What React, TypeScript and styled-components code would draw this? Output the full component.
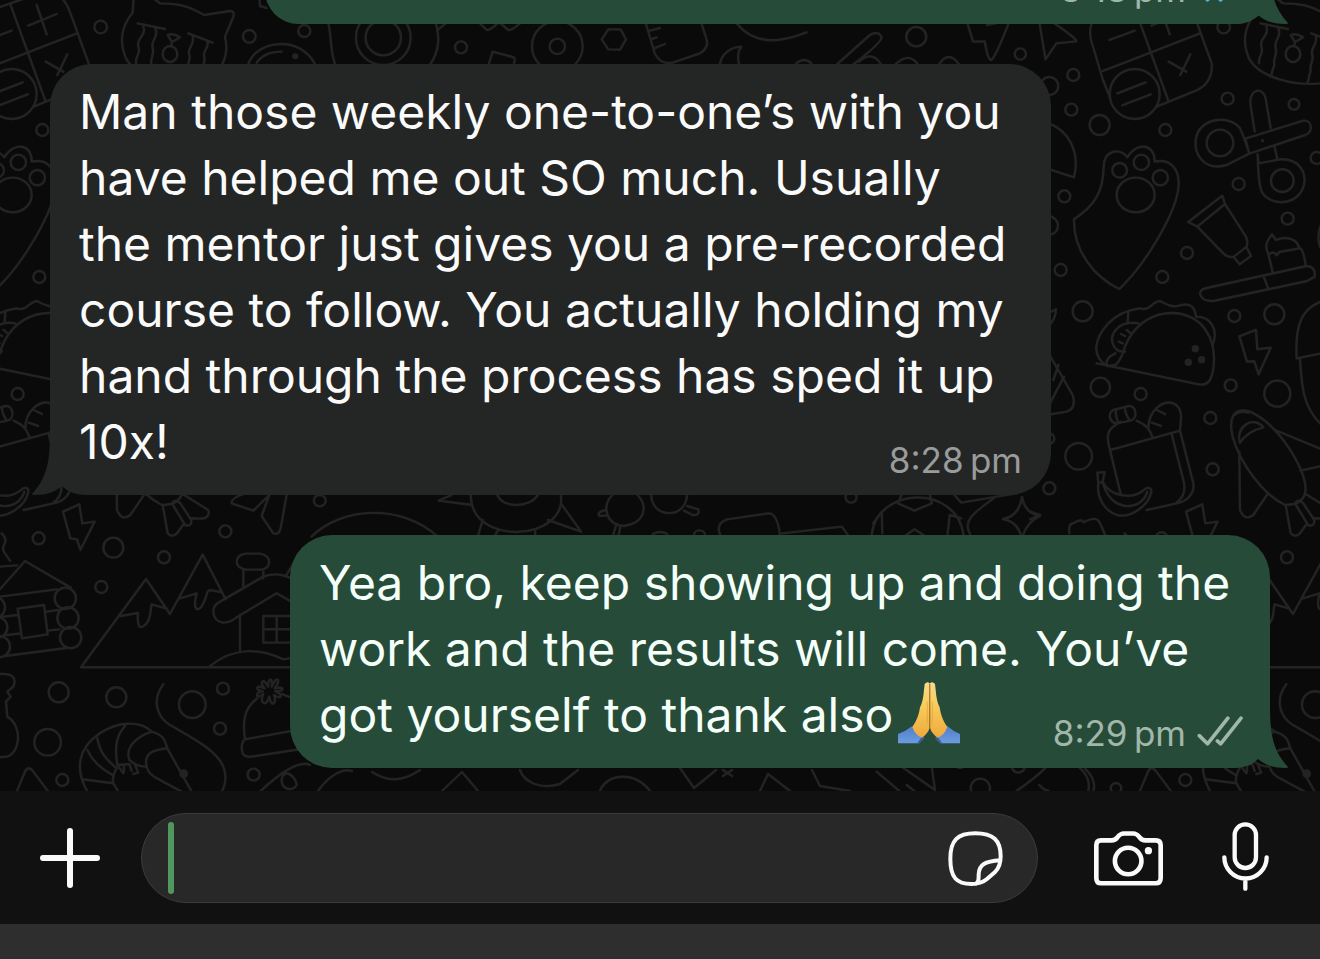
import React from "react";
import styled, { createGlobalStyle } from "styled-components";

const GlobalStyle = createGlobalStyle`
  *, *::before, *::after { box-sizing: border-box; }
  body { margin: 0; background: #0a0a0a; }
`;

const Screen = styled.main`
  display: flex;
  flex-direction: column;
  height: 100vh;
  overflow: hidden;
  font-family: Inter, "Liberation Sans", sans-serif;
`;

const Conversation = styled.section`
  position: relative;
  isolation: isolate;
  flex: 1;
  min-height: 0;
  display: flex;
  flex-direction: column;
  justify-content: flex-end;
  gap: 40px;
  padding: 0 50px 23px;
  overflow: hidden;
  background: #0a0a0a;
`;

const Wallpaper = styled.svg`
  position: absolute;
  inset: 0;
  z-index: -1;
  width: 100%;
  height: 100%;
`;

const Bubble = styled.article<{ $sent?: boolean; $max: number }>`
  position: relative;
  flex: none;
  width: 100%;
  max-width: ${(p) => p.$max}px;
  align-self: ${(p) => (p.$sent ? "flex-end" : "flex-start")};
  padding: 15px ${(p) => (p.$sent ? 27 : 29)}px 20px 29px;
  border-radius: 42px;
  background: ${(p) => (p.$sent ? "#274b39" : "#242625")};
  color: ${(p) => (p.$sent ? "#f4fff9" : "#fafafa")};
`;

const TailShape = styled.svg<{ $sent?: boolean }>`
  position: absolute;
  bottom: 0;
  ${(p) => (p.$sent ? "right: -18px;" : "left: -18px; transform: scaleX(-1);")}
  width: 60px;
  height: 60px;
  fill: ${(p) => (p.$sent ? "#274b39" : "#242625")};
`;

const Text = styled.p`
  margin: 0;
  font-size: 48px;
  line-height: 66px;
  white-space: pre-line;
`;

const LastRow = styled.div`
  display: flex;
  align-items: flex-end;
  justify-content: space-between;
`;

const Meta = styled.div<{ $sent?: boolean }>`
  flex: none;
  display: flex;
  align-items: baseline;
  gap: 11px;
  margin-left: auto;
  font-size: 35px;
  line-height: 30px;
  color: ${(p) => (p.$sent ? "#a0b7aa" : "#9a9b9b")};
`;

const TickIcon = styled.svg<{ $read?: boolean }>`
  width: 46px;
  height: 30px;
  fill: none;
  stroke: ${(p) => (p.$read ? "#5fb4e6" : "#a0b7aa")};
  stroke-width: 11;
  stroke-linecap: round;
  stroke-linejoin: round;
`;

const Emoji = styled.svg`
  width: 62px;
  height: 62px;
  margin-left: 5px;
  vertical-align: -12px;
`;

const Composer = styled.form`
  flex: none;
  display: flex;
  align-items: center;
  padding: 22px 51px 21px 40px;
  background: #111111;
`;

const IconButton = styled.button`
  flex: none;
  display: flex;
  padding: 0;
  border: 0;
  background: none;
  color: #fafafa;
  cursor: pointer;
`;

const Icon = styled.svg`
  display: block;
  fill: none;
  stroke: currentColor;
  stroke-linecap: round;
  stroke-linejoin: round;
`;

const Field = styled.div`
  flex: 1;
  min-width: 0;
  display: flex;
  align-items: center;
  height: 90px;
  margin: 0 56px 0 41px;
  padding: 0 34px 0 26px;
  border: 1px solid #3b3b3b;
  border-radius: 45px;
  background: #282828;
`;

const Caret = styled.span`
  flex: none;
  width: 6px;
  height: 72px;
  border-radius: 3px;
  background: #4f965f;
`;

const MessageInput = styled.input`
  flex: 1;
  min-width: 0;
  height: 72px;
  padding: 0 8px;
  border: 0;
  outline: 0;
  background: transparent;
  color: #fafafa;
  font: inherit;
  font-size: 48px;
`;

const Actions = styled.div`
  display: flex;
  align-items: center;
  gap: 59px;
`;

const KeyboardEdge = styled.div`
  flex: none;
  height: 35px;
  background: #2e2e2e;
`;

const Line = ({ d }: { d: string }) => <path d={d} vectorEffect="non-scaling-stroke" />;

const Rings = ({ at }: { at: number[][] }) => (
  <>
    {at.map(([x, y, r]) => (
      <circle key={`${x}-${y}-${r}`} cx={x} cy={y} r={r} vectorEffect="non-scaling-stroke" />
    ))}
  </>
);

const Doodles = () => (
  <g id="doodles">
    {/* calculator and crying cat */}
    <g transform="scale(.3333)">
      <Line d="M-60 240L-96 120C-104 80-95 55-60 42L60 0C120-22 165-35 190 0C208 20 214 50 266 190C270 230 250 262 211 275L101 320M30 10L137 305M-60 213L229 101M-40 120L35 92M85 77L170 42M110 15L140 103M137 185L190 215M202 163L172 225M-60 240L-38 295" />
      <Rings at={[[35, 282, 75], [302, 81, 19], [748, 109, 19], [913, 93, 18], [1150, 113, 82], [1150, 113, 53]]} />
      <Line d="M-17 280L68 247M-2 316L83 283" />
      <Line d="M402 -20L398 38C362 80 358 130 378 175C410 235 520 258 591 250C660 235 690 170 675 110L700 50Q705 33 690 33L612 45C560 15 530 10 480 10L460 -5" />
      <Line d="M413 70L495 87M565 100L638 128M430 78C440 110 408 112 415 140C424 160 405 168 408 190M465 82C478 112 452 118 458 144C465 165 448 174 454 196C446 212 450 220 442 230M578 106C586 138 560 140 568 166C574 180 558 192 563 215C555 230 560 240 553 248M622 122C630 145 606 150 613 172C618 190 602 200 605 220M503 105Q520 98 540 112Q528 120 516 126ZM516 126L513 138" />
      <ellipse cx="510" cy="162" rx="22" ry="24" vectorEffect="non-scaling-stroke" />
      <Line d="M745 192C770 120 900 105 945 192M770 188C790 160 815 156 845 155" />
      <circle cx="886" cy="169" r="9" fill="#232323" stroke="none" />
      <Line d="M985 70C995 110 990 150 1005 192M1305 60C1320 110 1320 150 1290 195M778 -10L780 18L800 24" />
    </g>
    {/* row above the first message */}
    <g transform="translate(340 14) scale(.3333)">
      <Rings at={[[363, 100, 18], [652, 97, 76], [652, 97, 23]]} />
      <Line d="M295 46L315 30M420 28L440 48Q450 50 475 26M478 25L505 48Q515 50 540 28M447 148L458 113L518 129Q528 132 522 148M805 46L842 46L858 76L840 107L805 106L785 76ZM915 20L945 120Q965 155 1000 145L1080 118Q1110 100 1098 70L1082 20M930 50L960 42M935 75L950 70M940 104L975 90M1190 28C1240 90 1310 90 1400 55M1140 150C1145 120 1170 100 1204 98C1192 115 1192 130 1197 150" />
    </g>
    <g transform="translate(640 0) scale(.4337 .3333)">
      <ellipse cx="637" cy="110" rx="23" ry="29" vectorEffect="non-scaling-stroke" />
      <ellipse cx="877" cy="162" rx="13" ry="17" vectorEffect="non-scaling-stroke" />
      <Line d="M455 192L530 105Q550 90 557 112Q558 128 480 205M505 185Q535 150 555 192M590 192Q620 155 640 192M360 190Q380 170 395 190M690 192Q712 150 735 192M755 70L768 125L795 124Q802 182 810 180Q820 170 850 70M800 75L838 65M920 60L935 178L960 130L1005 124Q1012 120 950 65" />
    </g>
    {/* paw, scissors, toothbrush and taco */}
    <g transform="translate(1030 60) scale(.3333)">
      <Rings at={[[58, 78, 27], [130, 45, 18], [124, 149, 18], [209, 195, 30], [406, 210, 18], [593, 116, 18], [792, 133, 16], [860, 294, 18], [626, 372, 18], [773, 476, 18], [471, 579, 18], [397, 651, 18], [103, 409, 18], [56, 497, 28], [92, 630, 18], [158, 754, 30], [613, 768, 18], [733, 763, 30], [269, 331, 22], [334, 307, 23], [391, 353, 23], [570, 249, 40], [757, 362, 34]]} />
      <Line d="M50 188C120 210 150 280 132 352L50 325M132 478C190 440 220 400 221 320C222 270 270 262 292 292C320 245 375 250 374 305C420 295 448 325 446 375C443 450 350 610 268 687C190 650 130 570 132 478" />
      <ellipse cx="317" cy="405" rx="57" ry="52" vectorEffect="non-scaling-stroke" />
      <Line d="M674 214L661 130C658 85 700 80 707 115L722 204M646 236L820 182C848 180 850 215 826 225L658 281ZM658 281L590 315C520 335 490 280 498 235C510 170 600 165 630 205Q640 225 658 281M683 283L686 310L750 298C810 295 830 340 822 375C805 440 720 440 695 395Q685 370 683 283M734 262L742 298" />
      <circle cx="698" cy="242" r="5" fill="#232323" stroke="none" />
      <Line d="M475 486L577 407L585 432L502 500ZM585 432L648 530Q655 545 650 560L612 590Q595 595 580 580L502 500M650 563L663 588L629 613L611 591M530 684L830 618Q858 620 854 650L832 663L550 723C510 725 495 690 530 684M702 652L714 684M728 637L716 585C700 550 715 540 726 523L738 540C760 530 800 530 808 565L748 576L740 586Q730 570 716 585M808 565Q820 565 827 615" />
      <Line d="M232 918C185 890 190 840 235 790C260 765 285 752 330 745C360 755 365 725 390 723C415 735 430 745 455 735C485 728 495 745 498 770C545 770 565 810 548 856M295 758L293 785M232 918L256 915C275 900 280 875 285 860C330 740 480 730 530 815C560 860 555 930 540 960Q530 975 510 974L200 910M325 790C270 780 235 820 250 855C255 870 265 876 285 875M256 880Q225 895 230 915M273 822L285 828M290 810L299 818M266 845L278 850" />
      <g fill="#232323" stroke="none">
        <circle cx="496" cy="866" r="11" />
        <circle cx="475" cy="907" r="11" />
        <circle cx="515" cy="899" r="11" />
      </g>
      <Line d="M628 829L678 810L682 868L722 863L686 943L673 904L651 905ZM800 895C795 800 810 735 900 717M800 895L900 875M810 897C815 980 820 1040 870 1090M890 470Q855 510 870 560M55 760L78 748Q78 775 55 800" />
    </g>
    {/* lunch bag, banana and rocket */}
    <g transform="translate(1030 360) scale(.3333)">
      <Rings at={[[211, 82, 29], [332, 102, 18], [602, 76, 18], [742, 101, 39], [541, 174, 18], [146, 289, 40], [57, 236, 16], [58, 385, 18], [548, 328, 18], [771, 592, 18], [395, 535, 18]]} />
      <Line d="M50 -30L128 105Q140 145 110 155L50 165M70 60L85 15M60 130L102 50M240 270C225 220 235 205 272 185M320 182C350 195 360 210 367 230M240 270L450 212L490 370C495 400 470 425 440 430L350 450M240 270L272 402M425 222L460 360Q472 405 440 427M250 150L295 138C320 135 325 178 300 182L262 190C238 190 232 158 250 150M258 152Q255 165 265 188M285 145Q285 160 298 180M355 205C355 150 400 120 430 130C465 145 450 190 450 212M380 150L405 162M365 188L393 198" />
      <Line d="M202 338L224 337L218 365C240 410 310 420 342 390C350 380 365 382 364 395C355 440 300 475 260 465C220 450 200 410 205 370ZM218 365C240 460 335 455 352 395M205 370L218 365" />
      <Line d="M765 435C700 405 630 310 608 230C595 175 610 140 660 155C750 195 840 345 825 400Q815 435 765 435M612 165Q630 150 655 158M630 248C615 200 670 165 700 202Q650 215 630 248M628 275L630 450Q645 485 670 465L712 403M735 210L905 280M812 332L910 310M768 440L782 520Q795 535 810 520L828 495M828 403L904 450Q910 475 880 476L855 475M795 430Q805 415 820 430L853 480Q855 500 835 496ZM468 455L517 433L526 490L563 485L520 570L510 538L490 535ZM0 455L30 465L0 478M118 520Q115 490 130 490Q155 475 162 487Q200 465 210 490L228 530" />
    </g>
    {/* strip between the two messages */}
    <g transform="translate(300 470) scale(.4592 .3333)">
      <Line d="M25 200C90 110 220 100 300 200M372 75C372 160 430 185 470 186C530 185 575 140 568 75M430 75C440 115 500 115 518 75M330 75L302 92L375 105M568 100L612 185L540 150M398 150L388 195M432 180L425 195M512 180L512 195M680 75C655 110 668 165 705 168C750 160 760 110 735 75M765 75C765 145 840 150 843 75M667 120Q645 125 652 138L670 136M843 108L868 118Q870 138 855 135L836 122M688 168L682 195M698 168L694 195M768 192Q785 180 800 192M915 195Q905 160 930 148L1020 130Q1040 130 1045 195M1050 190L1180 170L1193 195M1245 195C1255 50 1430 40 1445 195M1310 75L1302 100L1338 122L1376 100L1372 75M1248 160L1267 125L1268 190M1410 195L1415 135L1440 145M1320 195L1338 178L1358 195M1425 75L1440 98L1560 70" />
      <ellipse cx="43" cy="92" rx="13" ry="17" vectorEffect="non-scaling-stroke" />
      <ellipse cx="1200" cy="82" rx="12" ry="16" vectorEffect="non-scaling-stroke" />
      <ellipse cx="870" cy="195" rx="12" ry="14" vectorEffect="non-scaling-stroke" />
    </g>
    <Line d="M1022 497C1020 510 1014 517 1003 519C1014 521 1020 528 1022 540C1024 528 1030 521 1040 516C1030 514 1024 508 1022 497M994 498C975 512 962 520 970 534" />
    {/* cabin, mountains, house, prawn and hat */}
    <g transform="translate(0 470) scale(.3333)">
      <Rings at={[[340, 233, 30], [676, 184, 18], [304, 351, 18], [196, 385, 32], [204, 444, 32], [212, 503, 32], [-17, 412, 32], [-10, 472, 32], [-2, 530, 32], [176, 667, 30], [349, 682, 30], [577, 704, 40], [669, 656, 18], [660, 776, 18], [143, 817, 40], [187, 930, 18], [761, 914, 18]]} />
      <Line d="M695 100Q692 85 735 70M695 100L760 122L808 75L785 138L820 190Q838 195 842 175L860 75M5 190C35 220-5 225 15 250L30 272M0 290L50 286M0 358L75 273L212 353M0 380L170 358M10 440L55 435M140 425L175 420M20 495L62 490M143 482L178 478M15 558L200 534M53 416L132 405L143 493L66 505Z" />
      <Line d="M243 592L438 327L510 432L608 254L677 388M243 592L960 592M362 438L414 429C410 490 430 470 440 460C455 440 450 420 455 403L500 416M540 385L590 370C575 430 600 425 610 400C625 375 615 355 640 362L662 366M730 350V303M790 303V325M738 251H780C818 255 815 300 780 299H738C700 295 702 253 738 251M720 435V545M668 458C635 450 630 410 660 395L790 320C830 305 860 315 900 340M668 458Q690 458 710 442L830 370L900 410M790 438H900M790 438V518H900M790 478H900M830 438V518M628 590C700 530 780 535 850 568L900 560M858 318L880 280" />
      <Line d="M0 612C40 610 50 625 40 650L22 665L32 680L18 695L22 740C70 770 60 850 20 860L0 862M50 965L75 905Q85 885 100 905L145 965M490 643C455 690 470 740 510 765C570 800 650 840 670 890Q685 930 665 965M262 965C220 890 240 830 300 790C350 755 420 750 455 785C490 795 495 810 502 835L575 965M502 835C460 840 430 850 440 890Q445 915 480 930L545 965M455 785C410 800 375 830 388 870Q410 890 435 890M375 768C345 800 345 840 352 885L388 882M292 805C300 850 320 870 350 895Q335 920 340 940L355 965M262 840C280 880 310 900 338 915M247 928L340 940M352 885L370 910M372 885L372 905M388 882L395 903M405 885L415 908L400 912" />
      <circle cx="551" cy="911" r="13" fill="#232323" stroke="none" />
      <Line d="M735 808C725 740 740 710 772 685M845 672L890 690M735 808L900 778M735 808Q720 820 728 850Q735 862 755 860L900 838M790 672C770 690 760 668 788 664C762 660 768 642 794 655C775 635 792 622 804 650C805 620 820 622 815 650C830 615 846 628 824 655C855 648 856 664 826 664C850 672 846 692 822 675C832 705 812 712 808 680C800 712 776 700 790 672M780 965C850 900 900 870 930 885M845 930C850 890 890 920 890 945C880 965 845 960 845 930" />
    </g>
    {/* shapes that peek out above the message bar */}
    <g transform="translate(880 660) scale(.3333)">
      <Rings at={[[301, 385, 29], [708, 385, 16], [415, 318, 20], [240, 310, 14]]} />
      <Line d="M-10 335L60 395M50 310L165 390L155 320M80 375L105 395M410 392C460 360 480 340 500 320M595 320C625 345 630 370 625 392M615 325C645 355 645 380 640 392M478 375Q490 390 505 392" />
    </g>
    <Line d="M318 791C330 774 344 768 352 771M372 772C388 782 402 782 420 770M442 791L462 772L478 791M520 770C524 782 540 790 560 784L578 770M600 791C606 774 634 770 650 791M680 768L694 788L716 770M723 770L732 776M732 770L723 776M760 791L768 774L790 791M812 770L820 786L850 791" />
  </g>
);

const ChatWallpaper = () => (
  <Wallpaper aria-hidden="true">
    <defs>
      <pattern id="wallpaper" width="1123" height="800" patternUnits="userSpaceOnUse">
        <g fill="none" stroke="#232323" strokeWidth="2.400" strokeLinecap="round" strokeLinejoin="round">
          <Doodles />
          <use href="#doodles" x="-1123" />
          <use href="#doodles" x="1123" />
        </g>
      </pattern>
    </defs>
    <rect width="100%" height="100%" fill="url(#wallpaper)" />
  </Wallpaper>
);

const Tail = ({ sent }: { sent?: boolean }) => (
  <TailShape $sent={sent} viewBox="0 0 60 60" aria-hidden="true">
    <path d="M42 0C42 28 46 44 60 59Q60 60 58 60C45 60 37 57 30 51C24 57 16 60 4 60L0 60L20 20Z" />
  </TailShape>
);

const Ticks = ({ read }: { read?: boolean }) => (
  <TickIcon $read={read} viewBox="948 168 140 90" role="img" aria-label={read ? "Read" : "Delivered"}>
    <path d="M955 227L980 252L1042 174M1010 243L1020 252L1082 174" />
  </TickIcon>
);

const FoldedHands = () => (
  <Emoji viewBox="54 68 186 186" role="img" aria-label="Folded hands">
    <defs>
      <linearGradient id="skin" x1="0" y1="0" x2="0" y2="1">
        <stop offset="0" stopColor="#f6dc8c" />
        <stop offset=".4" stopColor="#f8cd5c" />
        <stop offset="1" stopColor="#efa93c" />
      </linearGradient>
      <linearGradient id="sleeve" x1="0" y1="0" x2="0" y2="1">
        <stop offset="0" stopColor="#4f7fc9" />
        <stop offset="1" stopColor="#6c9be0" />
      </linearGradient>
    </defs>
    <path d="M54 224Q78 215 97 200L132 236L118 252H54ZM240 224Q218 215 202 200L166 236L180 252H240Z" fill="url(#sleeve)" />
    <path d="M126 232L132 236L118 252L112 252ZM173 232L166 236L180 252L186 252Z" fill="#35599b" />
    <path d="M134 74Q142 64 149 72V205Q144 222 126 235Q106 228 97 203C112 182 118 160 120 144Q126 134 130 110Z" fill="url(#skin)" />
    <path d="M165 74Q157 64 150 72V205Q155 222 173 235Q193 228 202 203C187 182 181 160 179 144Q173 134 169 110Z" fill="url(#skin)" />
    <path d="M149.500 74V206" stroke="#a8681c" strokeWidth="3" />
    <path d="M142 128V190M157 128V190" stroke="#e29a35" strokeWidth="3" strokeLinecap="round" opacity=".6" />
  </Emoji>
);

export default function App() {
  return (
    <>
      <GlobalStyle />
      <Screen>
        <Conversation aria-label="Conversation">
          <ChatWallpaper />
          <Bubble $sent $max={1005}>
            <Tail sent />
            <LastRow>
              <Meta $sent>
                <time>8:18{"\u2009"}pm</time>
                <Ticks read />
              </Meta>
            </LastRow>
          </Bubble>
          <Bubble $max={1001}>
            <Tail />
            <Text>
              {"Man those weekly one-to-one’s with you\nhave helped me out SO much. Usually\nthe mentor just gives you a pre-recorded\ncourse to follow. You actually holding my\nhand through the process has sped it up"}
            </Text>
            <LastRow>
              <Text>10x!</Text>
              <Meta>
                <time>8:28{"\u2009"}pm</time>
              </Meta>
            </LastRow>
          </Bubble>
          <Bubble $sent $max={980}>
            <Tail sent />
            <Text>
              {"Yea bro, keep showing up and doing the\nwork and the results will come. You’ve"}
            </Text>
            <LastRow>
              <Text>
                got yourself to thank also
                <FoldedHands />
              </Text>
              <Meta $sent>
                <time>8:29{"\u2009"}pm</time>
                <Ticks />
              </Meta>
            </LastRow>
          </Bubble>
        </Conversation>
        <Composer onSubmit={(e) => e.preventDefault()}>
          <IconButton type="button" aria-label="Attach">
            <Icon width="60" height="60" viewBox="0 0 60 60" strokeWidth="6">
              <path d="M30 3V57M3 30H57" />
            </Icon>
          </IconButton>
          <Field>
            <Caret />
            <MessageInput type="text" aria-label="Message" />
            <IconButton type="button" aria-label="Stickers">
              <Icon width="55" height="55" viewBox="144 122 165 165" strokeWidth="12">
                <path d="M226 129C280 129 302 150 302 198C302 222 297 233 286 244L260 267C248 277 236 281 215 281C170 281 151 262 151 205C151 150 172 129 226 129ZM301 210C255 213 237 222 236 252C236 268 236 274 228 280" />
              </Icon>
            </IconButton>
          </Field>
          <Actions>
            <IconButton type="button" aria-label="Camera">
              <Icon width="69" height="55" viewBox="582 122 208 165" strokeWidth="14">
                <path d="M603 150H635C645 150 648 147 653 140C660 131 663 129 672 129H700C709 129 712 131 719 140C724 147 727 150 737 150H768Q783 150 783 165V263Q783 279 768 279H603Q589 279 589 263V165Q589 150 603 150Z" />
                <circle cx="685" cy="212" r="40" />
                <circle cx="746" cy="181" r="11" fill="currentColor" stroke="none" />
              </Icon>
            </IconButton>
            <IconButton type="button" aria-label="Voice message">
              <Icon width="47" height="73" viewBox="965 95 141 219" strokeWidth="13">
                <rect x="1003" y="102" width="64" height="131" rx="32" />
                <path d="M972 201A63 63 0 0 0 1099 201M1035 265V295" />
              </Icon>
            </IconButton>
          </Actions>
        </Composer>
        <KeyboardEdge />
      </Screen>
    </>
  );
}
